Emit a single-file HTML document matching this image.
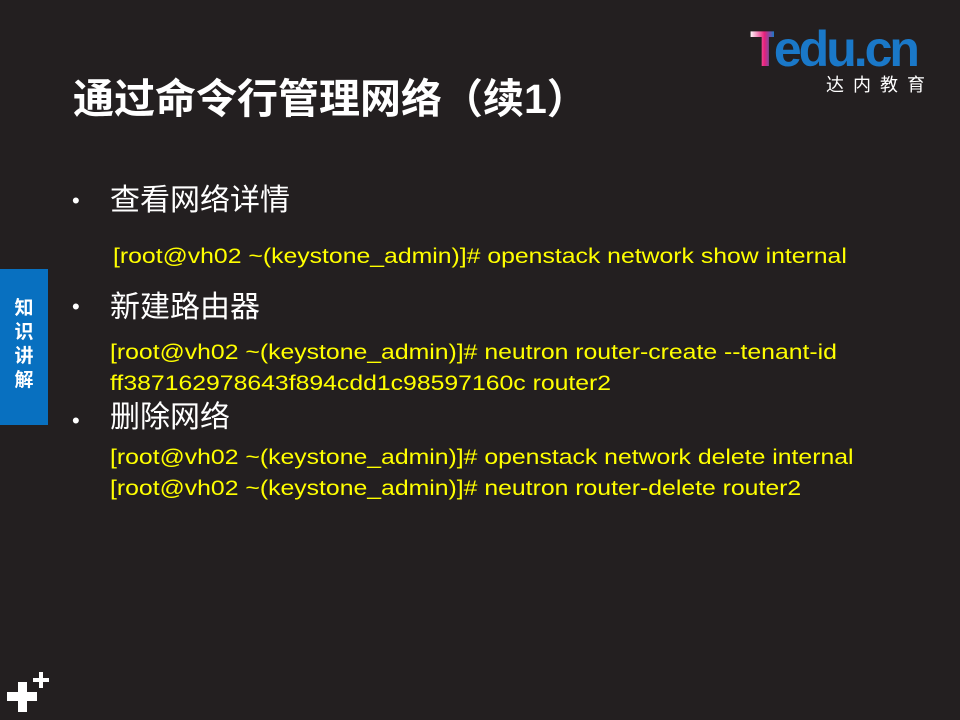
<!DOCTYPE html>
<html><head><meta charset="utf-8"><style>
body{margin:0;width:960px;height:720px;background:#231f20;position:relative;overflow:hidden;font-family:"Liberation Sans","Noto Sans CJK SC",sans-serif}
.a{position:absolute;white-space:nowrap}
.t{left:73px;top:74px;font-size:41px;font-weight:bold;color:#fff;line-height:50px}
.b{color:#fff;font-size:30px;line-height:40px}
.dot{color:#fff;font-size:22px}
.y{color:#ffff00;font-size:21px;line-height:31px;transform:scaleX(1.18);transform-origin:0 0}
</style></head><body>
<div class="a" style="left:750px;top:24px;font-size:50px;font-weight:bold;letter-spacing:-3px;line-height:50px">
<span style="background:linear-gradient(90deg,#fff,#e8207c 60%,#1a78c8);-webkit-background-clip:text;color:transparent">T</span><span style="color:#1a78c8">edu.cn</span></div>
<div class="a" style="left:826px;top:74px;font-size:18px;color:#fff;letter-spacing:9px;line-height:22px">达内教育</div>
<div class="a t">通过命令行管理网络（续1）</div>
<div class="a" style="left:0;top:269px;width:48px;height:156px;background:#0870c0"></div>
<div class="a" style="left:12px;top:297px;width:24px;color:#fff;font-weight:bold;font-size:19px;line-height:24px;white-space:normal;text-align:center">知识讲解</div>
<div class="a dot" style="left:72px;top:188px">•</div>
<div class="a b" style="left:110px;top:181px">查看网络详情</div>
<div class="a y" style="left:113px;top:241px">[root@vh02 ~(keystone_admin)]# openstack network show internal</div>
<div class="a dot" style="left:72px;top:294px">•</div>
<div class="a b" style="left:110px;top:288px">新建路由器</div>
<div class="a y" style="left:110px;top:337px">[root@vh02 ~(keystone_admin)]# neutron router-create --tenant-id<br>ff387162978643f894cdd1c98597160c router2</div>
<div class="a dot" style="left:72px;top:408px">•</div>
<div class="a b" style="left:110px;top:398px">删除网络</div>
<div class="a y" style="left:110px;top:442px">[root@vh02 ~(keystone_admin)]# openstack network delete internal<br>[root@vh02 ~(keystone_admin)]# neutron router-delete router2</div>
<div class="a" style="left:7px;top:692px;width:30px;height:9px;background:#fff"></div>
<div class="a" style="left:18px;top:682px;width:9px;height:30px;background:#fff"></div>
<div class="a" style="left:33px;top:678px;width:16px;height:4px;background:#fff"></div>
<div class="a" style="left:39px;top:672px;width:4px;height:16px;background:#fff"></div>
</body></html>
